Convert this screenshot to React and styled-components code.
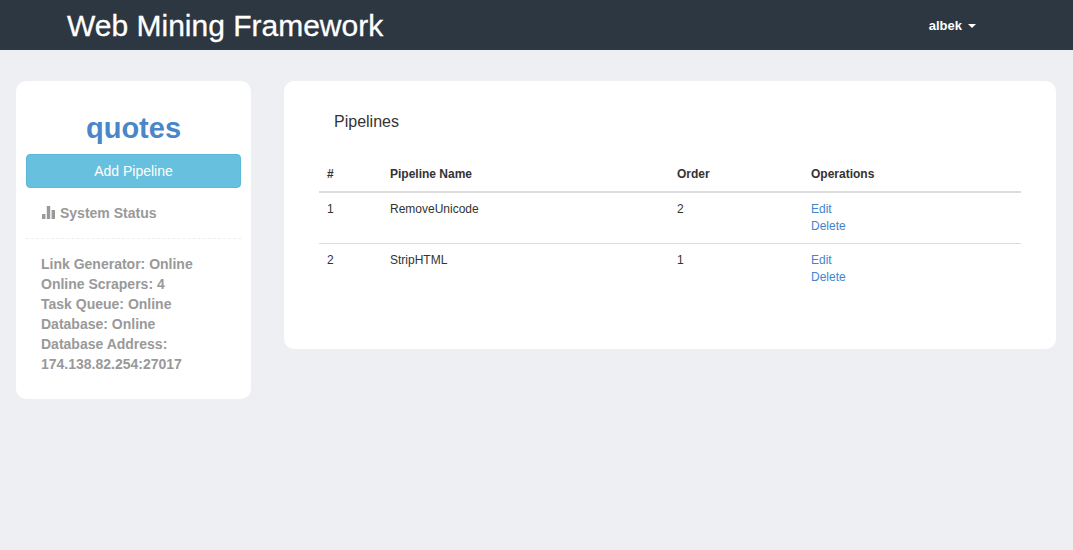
import React from 'react';
import styled, { createGlobalStyle } from 'styled-components';

const GlobalStyle = createGlobalStyle`
  html, body {
    margin: 0;
    padding: 0;
    background: #eeeff3;
    font-family: "Liberation Sans", Arial, sans-serif;
    color: #333;
  }
  * { box-sizing: border-box; }
`;

const Navbar = styled.header`
  height: 50px;
  background: #2d3742;
  display: flex;
  align-items: center;
  justify-content: space-between;
  padding: 0 97px 0 67px;
`;

const Brand = styled.div`
  font-size: 30px;
  color: #fff;
  padding-top: 2px;
  line-height: 50px;
  -webkit-text-stroke: 0.3px #fff;
`;

const UserMenu = styled.div`
  display: flex;
  align-items: center;
  gap: 6px;
  font-size: 13px;
  font-weight: bold;
  color: #fff;
`;

const Caret = styled.span`
  width: 0;
  height: 0;
  margin-top: 2px;
  border-top: 4px solid #fff;
  border-left: 4px solid transparent;
  border-right: 4px solid transparent;
`;

const Content = styled.main`
  display: grid;
  grid-template-columns: 235px 772px;
  column-gap: 33px;
  align-items: start;
  padding: 31px 0 0 16px;
`;

const Card = styled.section`
  background: #fff;
  border-radius: 10px;
`;

const Sidebar = styled(Card)`
  height: 318px;
  padding: 30px 10px 0;
`;

const ProjectName = styled.h1`
  margin: 0;
  height: 43px;
  font-size: 29px;
  line-height: 34px;
  font-weight: bold;
  text-align: center;
  color: #4a86c8;
`;

const AddButton = styled.button`
  display: block;
  width: 100%;
  height: 34px;
  padding: 0;
  font-family: inherit;
  font-size: 14px;
  color: #fff;
  background: #67c0dd;
  border: 1px solid #5bb8d6;
  border-radius: 4px;
`;

const StatusHeading = styled.div`
  display: flex;
  align-items: center;
  gap: 5px;
  height: 51px;
  padding: 0 0 1px 16px;
  font-size: 14px;
  font-weight: bold;
  color: #999;
  border-bottom: 1px dashed #eee;
`;

const StatusList = styled.div`
  padding: 15px 0 0 15px;
  font-size: 14px;
  line-height: 20px;
  font-weight: bold;
  color: #999;
`;

const MainPanel = styled(Card)`
  height: 268px;
  padding: 31px 35px 0;
`;

const PanelTitle = styled.h2`
  margin: 0 0 24px 15px;
  font-size: 16px;
  line-height: 20px;
  font-weight: normal;
  color: #333;
`;

const Table = styled.table`
  width: 702px;
  table-layout: fixed;
  border-collapse: collapse;
  font-size: 12px;
  line-height: 17px;
`;

const HeadCell = styled.th`
  padding: 9px 8px 7px;
  height: 36px;
  text-align: left;
  font-weight: bold;
  color: #333;
  border-bottom: 2px solid #ddd;
`;

const Row = styled.tr`
  & + & td {
    border-top: 1px solid #ddd;
  }
`;

const Cell = styled.td`
  padding: 8px;
  vertical-align: top;
  color: #333;
`;

const OpLink = styled.a`
  display: block;
  color: #4285cf;
  text-decoration: none;
`;

const BarsIcon = () => (
  <svg width="13" height="13" viewBox="0 0 13 13" fill="#999" aria-hidden="true">
    <rect x="0" y="8" width="3.4" height="5" />
    <rect x="4.8" y="0" width="3.4" height="13" />
    <rect x="9.6" y="4" width="3.4" height="9" />
  </svg>
);

const pipelines = [
  { id: 1, name: 'RemoveUnicode', order: 2 },
  { id: 2, name: 'StripHTML', order: 1 },
];

const statusLines = [
  'Link Generator: Online',
  'Online Scrapers: 4',
  'Task Queue: Online',
  'Database: Online',
  'Database Address:',
  '174.138.82.254:27017',
];

const App = () => (
  <>
    <GlobalStyle />
    <Navbar>
      <Brand>Web Mining Framework</Brand>
      <UserMenu>
        albek
        <Caret />
      </UserMenu>
    </Navbar>
    <Content>
      <Sidebar>
        <ProjectName>quotes</ProjectName>
        <AddButton>Add Pipeline</AddButton>
        <StatusHeading>
          <BarsIcon />
          System Status
        </StatusHeading>
        <StatusList>
          {statusLines.map((line) => (
            <div key={line}>{line}</div>
          ))}
        </StatusList>
      </Sidebar>
      <MainPanel>
        <PanelTitle>Pipelines</PanelTitle>
        <Table>
          <colgroup>
            <col style={{ width: 63 }} />
            <col style={{ width: 287 }} />
            <col style={{ width: 134 }} />
            <col />
          </colgroup>
          <thead>
            <tr>
              <HeadCell>#</HeadCell>
              <HeadCell>Pipeline Name</HeadCell>
              <HeadCell>Order</HeadCell>
              <HeadCell>Operations</HeadCell>
            </tr>
          </thead>
          <tbody>
            {pipelines.map((p) => (
              <Row key={p.id}>
                <Cell>{p.id}</Cell>
                <Cell>{p.name}</Cell>
                <Cell>{p.order}</Cell>
                <Cell>
                  <OpLink href="#">Edit</OpLink>
                  <OpLink href="#">Delete</OpLink>
                </Cell>
              </Row>
            ))}
          </tbody>
        </Table>
      </MainPanel>
    </Content>
  </>
);

export default App;
